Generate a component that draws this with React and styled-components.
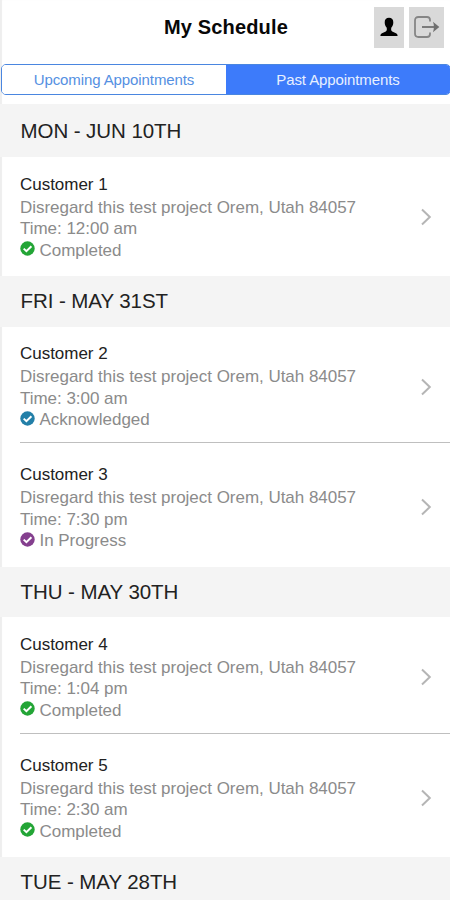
import React, { useState } from "react";
import styled, { createGlobalStyle } from "styled-components";

const GlobalStyle = createGlobalStyle`
  body {
    margin: 0;
    background: #fff;
    font-family: "Liberation Sans", Arial, sans-serif;
  }
`;

const statusColors = {
  Completed: "#23a536",
  Acknowledged: "#237fa8",
  "In Progress": "#843f8e",
};

const address = "Disregard this test project Orem, Utah 84057";

const days = [
  {
    title: "MON - JUN 10TH",
    items: [{ name: "Customer 1", time: "12:00 am", status: "Completed" }],
  },
  {
    title: "FRI - MAY 31ST",
    items: [
      { name: "Customer 2", time: "3:00 am", status: "Acknowledged" },
      { name: "Customer 3", time: "7:30 pm", status: "In Progress" },
    ],
  },
  {
    title: "THU - MAY 30TH",
    items: [
      { name: "Customer 4", time: "1:04 pm", status: "Completed" },
      { name: "Customer 5", time: "2:30 am", status: "Completed" },
    ],
  },
  { title: "TUE - MAY 28TH", items: [] },
];

const PersonIcon = () => (
  <svg width="18" height="20" viewBox="0 0 18 20">
    <path
      d="M9 .8C6.200.8 4.700 2.600 4.700 5.200c0 2.300.7 4.100 1.900 5.400.5 1.900.3 3.300-.8 3.900L2 16.300c-1.100.5-1.500 1.200-1.600 2.700h17.200c-.1-1.500-.5-2.200-1.600-2.700l-3.800-1.800c-1.100-.6-1.300-2-.8-3.900 1.200-1.300 1.900-3.100 1.900-5.400C13.300 2.600 11.800.8 9 .8z"
      fill="#000"
    />
  </svg>
);

const LogoutIcon = () => (
  <svg width="26" height="22" viewBox="0 0 26 22" fill="none">
    <path
      d="M16 5.500V4Q16 1 13 1H4.500Q1 1 1 4.500v13Q1 21 4.500 21H13q3 0 3-3v-1.500"
      stroke="#858585"
      strokeWidth="1.800"
    />
    <path d="M8 11h14" stroke="#777" strokeWidth="1.900" />
    <path d="M19 5.800L25.300 11 19 16.200c1.200-3.400 1.200-7 0-10.400z" fill="#707070" />
  </svg>
);

const CheckIcon = ({ color }) => (
  <svg width="15" height="15" viewBox="0 0 15 15" fill="none">
    <circle cx="7.500" cy="7.500" r="7.200" fill={color} />
    <path d="M3.700 7.600l2.700 2.600 5-5" stroke="#fff" strokeWidth="2" />
  </svg>
);

const ChevronIcon = () => (
  <svg width="12" height="18" viewBox="0 0 12 18" fill="none">
    <path d="M2 1.500L9.800 9 2 16.500" stroke="#b5b5b5" strokeWidth="2" />
  </svg>
);

const Appointment = ({ item }) => (
  <Row>
    <Details>
      <Name>{item.name}</Name>
      <Line>{address}</Line>
      <Line>Time: {item.time}</Line>
      <Status>
        <CheckIcon color={statusColors[item.status]} />
        <Line>{item.status}</Line>
      </Status>
    </Details>
    <ChevronIcon />
  </Row>
);

const App = () => {
  const [tab, setTab] = useState("past");

  return (
    <Screen>
      <GlobalStyle />
      <Header>
        <Title>My Schedule</Title>
        <Actions>
          <IconButton $width="30px" aria-label="Profile">
            <PersonIcon />
          </IconButton>
          <IconButton $width="35px" aria-label="Log out">
            <LogoutIcon />
          </IconButton>
        </Actions>
      </Header>
      <Tabs>
        <Tab $active={tab === "upcoming"} onClick={() => setTab("upcoming")}>
          Upcoming Appointments
        </Tab>
        <Tab $active={tab === "past"} onClick={() => setTab("past")}>
          Past Appointments
        </Tab>
      </Tabs>
      {days.map((day) => (
        <section key={day.title}>
          <DayTitle>{day.title}</DayTitle>
          {day.items.map((item) => (
            <Appointment key={item.name} item={item} />
          ))}
        </section>
      ))}
    </Screen>
  );
};

const Screen = styled.div`
  box-sizing: border-box;
  height: 900px;
  overflow: hidden;
  box-shadow: inset 2px 0 1px #eee;
`;

const Header = styled.header`
  display: grid;
  grid-template-columns: 1fr auto 1fr;
  align-items: center;
  height: 54px;
  padding: 0 6px 10px 8px;
`;

const Title = styled.h1`
  grid-column: 2;
  margin: 0;
  font-size: 20px;
  line-height: 24px;
  letter-spacing: 0.15px;
  color: #080808;
`;

const Actions = styled.div`
  display: flex;
  justify-content: flex-end;
  gap: 5px;
`;

const IconButton = styled.button`
  display: flex;
  align-items: center;
  justify-content: center;
  width: ${(props) => props.$width};
  height: 41px;
  padding: 0;
  border: none;
  background: #d9d9d9;
`;

const Tabs = styled.div`
  display: flex;
  box-sizing: border-box;
  height: 31px;
  margin: 0 -1px 9px 1px;
  border: 1px solid #4a86e0;
  border-radius: 5px;
  overflow: hidden;
`;

const Tab = styled.button`
  flex: 1;
  padding: 0;
  border: none;
  font-family: inherit;
  font-size: 15px;
  letter-spacing: -0.1px;
  color: ${(props) => (props.$active ? "#e8f0ff" : "#5590e2")};
  background: ${(props) => (props.$active ? "#3d7bfa" : "#fff")};
`;

const DayTitle = styled.h2`
  box-sizing: border-box;
  height: 50.5px;
  margin: 0;
  padding: 0 20.5px;
  font-size: 20.5px;
  font-weight: 400;
  line-height: 50px;
  letter-spacing: -0.07px;
  color: #222;
  background: #f4f4f4;

  section:first-of-type > & {
    height: 53px;
    padding-top: 1.5px;
  }
`;

const Row = styled.div`
  display: flex;
  align-items: center;
  justify-content: space-between;
  box-sizing: border-box;
  height: 119px;
  margin-left: 20px;
  padding: 14px 18px 13px 0;

  &:not(:last-child) {
    height: 115.5px;
    padding-bottom: 9.5px;
  }

  & + & {
    height: 124.5px;
    padding-top: 18px;
    border-top: 1px solid #bfbfbf;
  }
`;

const Details = styled.div`
  display: flex;
  flex-direction: column;
  font-size: 17px;
  letter-spacing: -0.03px;
`;

const Name = styled.div`
  line-height: 24px;
  color: #222;
`;

const Line = styled.div`
  line-height: 21.5px;
  color: #8b8b8b;
`;

const Status = styled.div`
  display: flex;
  align-items: flex-start;
  gap: 4.5px;

  svg {
    margin-top: 1.5px;
  }
`;

export default App;
